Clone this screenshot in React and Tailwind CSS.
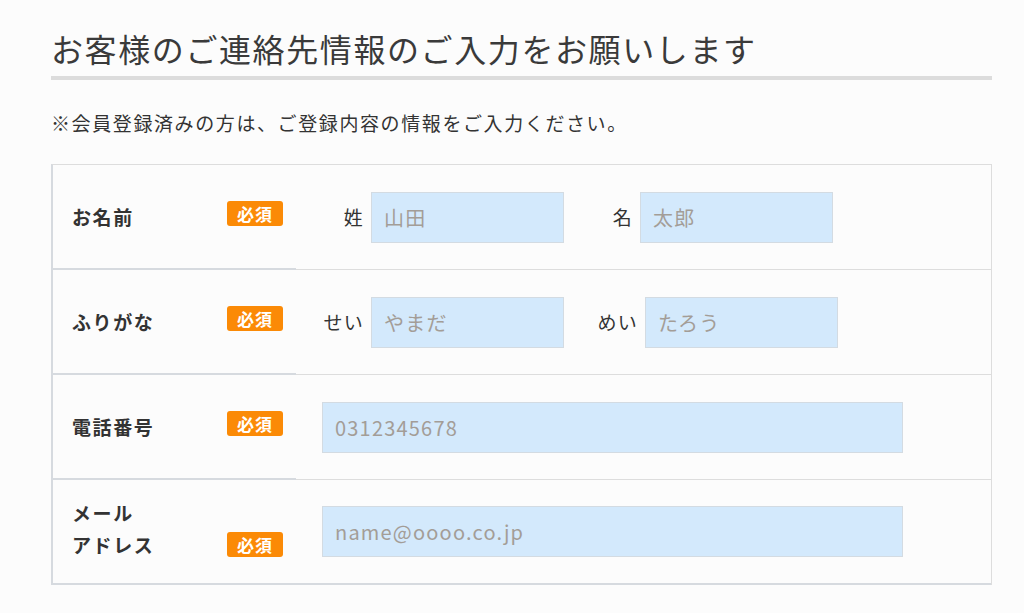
import React from 'react';

const FONT = { fontFamily: '"Noto Sans CJK JP", "Noto Sans", sans-serif' };

function Badge({ className = '' }) {
  return (
    <span className={`inline-flex items-center justify-center w-[56px] h-[25px] rounded-[3px] bg-[#fb8a06] text-white text-[17px] font-bold leading-none tracking-[1px] ${className}`}>
      必須
    </span>
  );
}

function Field({ placeholder, className = '' }) {
  return (
    <input
      type="text"
      placeholder={placeholder}
      className={`h-[51px] bg-[#d3e9fc] border border-[#d3dbe2] pl-[12px] text-[20px] tracking-[1.2px] text-[#333] placeholder:text-[#a39d97] outline-none ${className}`}
      style={FONT}
    />
  );
}

function Row({ label, children, badgeClass = 'mb-[6px]', labelClass = '', last = false }) {
  return (
    <div className="flex h-[105px]">
      <div className="w-[243px] shrink-0 flex items-center justify-between pl-[19px] pr-[13px] border-b-2 border-[#d6dadf]">
        <div className={`text-[19px] font-bold leading-[32px] tracking-[1.6px] text-[#333] ${labelClass}`}>{label}</div>
        <Badge className={badgeClass} />
      </div>
      <div className={`flex-1 flex items-center pl-[26px] border-[#dddddd] ${last ? 'border-b-2 border-b-[#d6dadf]' : 'border-b'}`}>
        {children}
      </div>
    </div>
  );
}

function NamePart({ label, labelWidth, placeholder }) {
  return (
    <div className="flex items-center">
      <span className={`${labelWidth} shrink-0 flex justify-end whitespace-nowrap text-[19px] tracking-[1.2px] text-[#333] mr-[7px]`}>{label}</span>
      <Field placeholder={placeholder} className="w-[193px]" />
    </div>
  );
}

export default function App() {
  return (
    <div className="min-h-screen bg-[#fcfcfc] pt-[27px] pl-[51px] text-[#333]" style={FONT}>
      <h1 className="w-[941px] text-[32px] font-normal leading-[42px] tracking-[1.6px] pb-[7px] border-b-4 border-[#dcdcdc] text-[#3a3a3a]">
        お客様のご連絡先情報のご入力をお願いします
      </h1>

      <p className="mt-[29px] text-[19px] leading-[28px] tracking-[1.6px]">
        ※会員登録済みの方は、ご登録内容の情報をご入力ください。
      </p>

      <div className="mt-[27px] w-[941px] border-t border-r border-[#dddddd] border-l-2 border-l-[#d6dadf]">
        <Row label="お名前">
          <NamePart label="姓" labelWidth="w-[42px]" placeholder="山田" />
          <div className="ml-[34px]">
            <NamePart label="名" labelWidth="w-[35px]" placeholder="太郎" />
          </div>
        </Row>
        <Row label="ふりがな">
          <NamePart label="せい" labelWidth="w-[42px]" placeholder="やまだ" />
          <div className="ml-[34px]">
            <NamePart label="めい" labelWidth="w-[40px]" placeholder="たろう" />
          </div>
        </Row>
        <Row label="電話番号">
          <Field placeholder="0312345678" className="w-[581px]" />
        </Row>
        <Row label={<>メール<br />アドレス</>} labelClass="-mt-[6px]" badgeClass="mt-[26px]" last>
          <Field placeholder="name@oooo.co.jp" className="w-[581px]" />
        </Row>
      </div>
    </div>
  );
}
